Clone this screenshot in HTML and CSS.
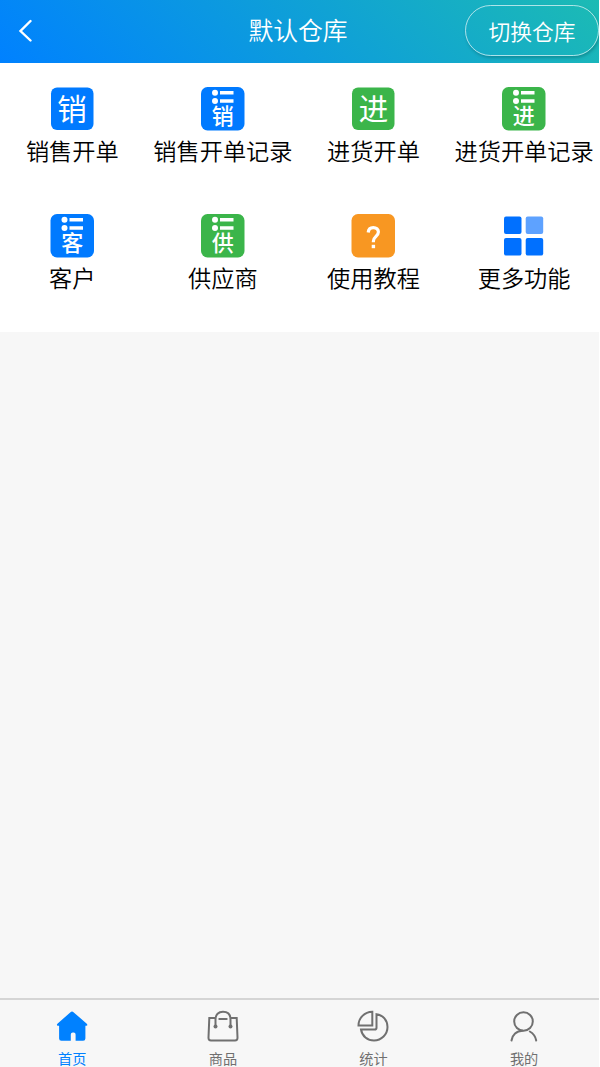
FILE: index.html
```
<!DOCTYPE html>
<html lang="zh-CN">
<head>
	<meta charset="UTF-8">
	<title>默认仓库</title>
	<link rel="stylesheet" href="styles.css">
</head>
<body>
	<div class="page">
		<div class="header">
			<svg class="back" viewBox="0 0 16 24"><path d="M13.500 3 3.500 13l10 9.500"/></svg>
			<div class="title">默认仓库</div>
			<div class="switch">切换仓库</div>
		</div>

		<div class="menu">
			<div class="item">
				<svg class="icon" viewBox="0 0 44 44"><rect class="blue" x="1" y=".5" width="42.500" height="42.500" rx="6"/><text class="big" x="22" y="32.500">销</text></svg>
				<div class="name">销售开单</div>
			</div>
			<div class="item">
				<svg class="icon" viewBox="0 0 44 44"><rect class="blue" width="43.500" height="43.500" rx="6.500"/><g class="list"><circle cx="14" cy="5.800" r="3"/><circle cx="14" cy="14" r="3"/><path d="M19 4h13.500v3.400H19zM19 12.300h13.500v3.400H19z"/></g><text class="small" x="21.800" y="37">销</text></svg>
				<div class="name">销售开单记录</div>
			</div>
			<div class="item">
				<svg class="icon" viewBox="0 0 44 44"><rect class="green" x="1" y=".5" width="42.500" height="42.500" rx="6"/><text class="big" x="22.500" y="33">进</text></svg>
				<div class="name">进货开单</div>
			</div>
			<div class="item">
				<svg class="icon" viewBox="0 0 44 44"><rect class="green" width="43.500" height="43.500" rx="6.500"/><g class="list"><circle cx="14" cy="5.800" r="3"/><circle cx="14" cy="14" r="3"/><path d="M19 4h13.500v3.400H19zM19 12.300h13.500v3.400H19z"/></g><text class="small" x="21.800" y="37">进</text></svg>
				<div class="name">进货开单记录</div>
			</div>
			<div class="item">
				<svg class="icon" viewBox="0 0 44 44"><rect class="blue" x=".5" width="43.500" height="43.500" rx="6.500"/><g class="list"><circle cx="14.500" cy="5.800" r="3"/><circle cx="14.500" cy="14" r="3"/><path d="M19.500 4H33v3.400H19.500zM19.500 12.300H33v3.400H19.500z"/></g><text class="small" x="22.300" y="37">客</text></svg>
				<div class="name">客户</div>
			</div>
			<div class="item">
				<svg class="icon" viewBox="0 0 44 44"><rect class="green" width="43.500" height="43.500" rx="6.500"/><g class="list"><circle cx="14" cy="5.800" r="3"/><circle cx="14" cy="14" r="3"/><path d="M19 4h13.500v3.400H19zM19 12.300h13.500v3.400H19z"/></g><text class="small" x="21.800" y="37">供</text></svg>
				<div class="name">供应商</div>
			</div>
			<div class="item">
				<svg class="icon" viewBox="0 0 44 44"><rect class="orange" x=".5" width="43.500" height="43.500" rx="6.500"/><path class="ask" d="M17.200 18.500c.3-3.300 2.300-4.900 5.100-4.900 3 0 5.100 1.700 5.100 4.500 0 4-5 4.500-5 8.900v1.300"/><path class="dot" d="M20.700 30.800h3.400v3.400h-3.400z"/></svg>
				<div class="name">使用教程</div>
			</div>
			<div class="item">
				<svg class="icon" viewBox="0 0 44 44"><g class="more"><rect x="2" y="2.500" width="17.500" height="17.500" rx="2"/><rect class="light" x="23.700" y="2.500" width="17.500" height="17.500" rx="2"/><rect x="2" y="24" width="17.500" height="17.500" rx="2"/><rect x="23.700" y="24" width="17.500" height="17.500" rx="2"/></g></svg>
				<div class="name">更多功能</div>
			</div>
		</div>

		<div class="tabbar">
			<div class="tab on">
				<svg viewBox="0 0 32 32"><path class="fill" d="M14.500 2.200q1.500-1.300 3 0l13 11.300q1.800 2-.2 2.200h-.9v12.800q0 2.300-2.300 2.300h-7.500v-6.300q0-2-2-2h-.8q-2 0-2 2v6.300H5.400q-2.300 0-2.300-2.300V15.700h-1.200q-2-.2-.2-2.200z"/></svg>
				<div>首页</div>
			</div>
			<div class="tab">
				<svg viewBox="0 0 32 32"><path d="M8.500 8H2.300L1.500 27.500Q1.400 30.500 4 30.500h24q2.600 0 2.500-3L29.700 8h-6.200M8.500 16V9.500C8.500 4.500 11.500 1.800 16 1.800s7.500 2.700 7.500 7.700V16M12.300 9h7.400"/><circle class="fill" cx="8.500" cy="16.500" r="2"/><circle class="fill" cx="23.500" cy="16.500" r="2"/></svg>
				<div>商品</div>
			</div>
			<div class="tab">
				<svg viewBox="0 0 32 32"><path d="M15.300 1.800v13.700H1.500C1.500 8 7.500 2 15.300 1.800zM19.500 4.200v13.500q0 1.800-1.800 1.800H4C5 26 10.500 30.500 17 30.500c7.500 0 13.500-6 13.500-13.400 0-6.800-4.500-12-11-12.900z"/></svg>
				<div>统计</div>
			</div>
			<div class="tab">
				<svg viewBox="0 0 32 32"><circle cx="15.500" cy="11.500" r="9.300"/><path d="M3.500 30.500c.8-5.500 5-9.700 11-9.700M21.800 21.500c3.500 2 5.700 5 6.400 9"/></svg>
				<div>我的</div>
			</div>
		</div>
	</div>
</body>
</html>
```

FILE: styles.css
```
*{box-sizing: border-box;}
body{margin: 0;background: #fff;font-family: "Noto Sans CJK SC",sans-serif;color: #000;}
.page{width: 599px;height: 1067px;display: flex;flex-direction: column;background: #f7f7f7;overflow: hidden;}

.header{height: 63.400px;flex: none;display: grid;grid-template-columns: 134px 1fr 134px;color: #fff;font-weight: 350;background: linear-gradient(45deg,#0081ff,#1cbbb4);}
.back{width: 16px;height: 24px;margin: 18px 0 0 17px;fill: none;stroke: #fff;stroke-width: 2.400;stroke-linecap: round;}
.title{height: 59px;line-height: 59px;text-align: center;font-size: 24.800px;margin-left: -3px;}
.switch{height: 51px;line-height: 49px;margin-top: 5px;text-align: center;font-size: 21.800px;border: 1px solid rgba(255,255,255,.65);border-radius: 26px;box-shadow: 1px 2px 3px rgba(0,80,90,.35);}

.menu{height: 268.600px;flex: none;display: grid;grid-template-columns: repeat(4,150.600px);grid-auto-rows: 126.700px;margin-left: -3px;padding-top: 23.600px;background: #fff;}
.item{text-align: center;white-space: nowrap;}
.icon{display: block;width: 44px;height: 44px;margin: 0 auto;}
.name{height: 38px;line-height: 38px;font-size: 23.200px;font-weight: 350;}
.blue{fill: #007aff;}
.green{fill: #3bb54a;}
.orange{fill: #f89722;}
.icon text{fill: #fff;text-anchor: middle;}
.big{font-size: 29.500px;font-weight: 400;}
.small{font-size: 22px;font-weight: 500;}
.list,.dot{fill: #fff;}
.ask{fill: none;stroke: #fff;stroke-width: 3.200;}
.more{fill: #0070ff;}
.more .light{fill: #5ea2ff;}

.tabbar{height: 69px;margin-top: auto;display: grid;grid-template-columns: repeat(4,150.600px);margin-left: -3px;padding-top: 10px;border-top: 2px solid #d5d5d5;color: #707070;font-size: 14.200px;line-height: 18px;text-align: center;}
.tab svg{display: block;width: 32px;height: 32px;margin: 0 auto 7px;fill: none;stroke: currentColor;stroke-width: 2;stroke-linecap: round;}
.tab .fill{fill: currentColor;stroke: none;}
.tabbar .on{color: #0081ff;}
```
